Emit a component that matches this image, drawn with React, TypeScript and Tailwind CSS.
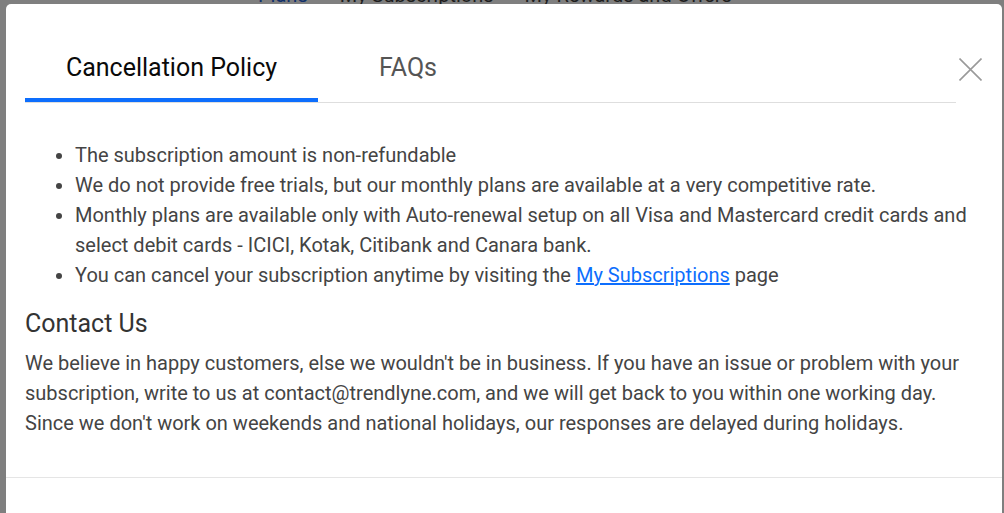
import React from "react";

export default function App() {
  const font = { fontFamily: "Roboto, 'Noto Sans', Arial, sans-serif" };
  return (
    <div className="w-[1004px] h-[513px] overflow-hidden bg-[#7f7f7f] flex flex-col" style={font}>
      <div className="h-[4px] overflow-hidden shrink-0">
        <div className="-mt-[17px] flex text-[20px] leading-[24px] text-[#1e1e1e]">
          <span className="ml-[258px] text-[#10306a]">Plans</span>
          <span className="ml-[32px]">My Subscriptions</span>
          <span className="ml-[31px]">My Rewards and Offers</span>
        </div>
      </div>
      <div className="ml-[6px] mr-[2px] flex-1 bg-white rounded-t-[5px] flex flex-col">
        <div className="flex pl-[19px]">
          <div className="flex-1 flex border-b border-[#dedede]">
            <div className="w-[293px] pt-[50px] pb-[16px] border-b-4 border-[#0d6efd] text-center text-[25px] leading-[28px] text-[#0a0a0a]">
              Cancellation Policy
            </div>
            <div className="ml-[61px] pt-[50px] text-[25px] leading-[28px] text-[#555]">FAQs</div>
          </div>
          <div className="w-[46px] shrink-0">
            <svg className="ml-[3px] mt-[54px]" width="23" height="23" viewBox="0 0 23 23">
              <path d="M0.5 0.5 L22.5 22.5 M22.5 0.5 L0.5 22.5" stroke="#9a9a9a" strokeWidth="1.6" fill="none" />
            </svg>
          </div>
        </div>
        <div className="pl-[19px] pr-[20px] pb-[39px] text-[20px] leading-[30px] text-[#444]">
          <ul className="list-disc pl-[50px] mt-[37px]">
            <li>The subscription amount is non-refundable</li>
            <li>We do not provide free trials, but our monthly plans are available at a very competitive rate.</li>
            <li>
              Monthly plans are available only with Auto-renewal setup on all Visa and Mastercard credit cards and select debit cards - ICICI, Kotak, Citibank and Canara bank.
            </li>
            <li>
              You can cancel your subscription anytime by visiting the{" "}
              <a href="#" className="text-[#0d6efd] underline">My Subscriptions</a> page
            </li>
          </ul>
          <h3 className="mt-[20px] text-[25px] leading-[28px] text-[#333]">Contact Us</h3>
          <p className="mt-[10px]">
            We believe in happy customers, else we wouldn't be in business. If you have an issue or problem with your subscription, write to us at contact@trendlyne.com, and we will get back to you within one working day. Since we don't work on weekends and national holidays, our responses are delayed during holidays.
          </p>
        </div>
        <div className="border-t border-[#e5e5e5] flex-1" />
      </div>
    </div>
  );
}
